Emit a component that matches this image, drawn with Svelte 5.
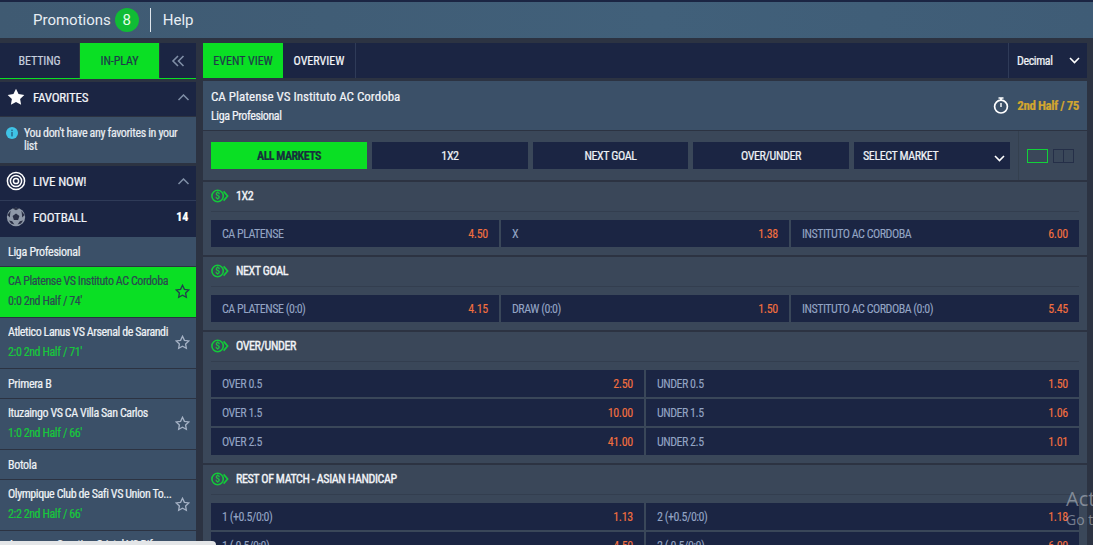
<script>
  const favStar = 'M9 1.6l2.3 4.8 5.2.7-3.8 3.6.9 5.2L9 13.4l-4.6 2.5.9-5.2L1.5 7.1l5.2-.7z';

  const sidebar = [
    { type: 'league', name: 'Liga Profesional' },
    { type: 'match', name: 'CA Platense VS Instituto AC Cordoba', info: '0:0 2nd Half / 74\'', active: true },
    { type: 'match', name: 'Atletico Lanus VS Arsenal de Sarandi', info: '2:0 2nd Half / 71\'' },
    { type: 'league', name: 'Primera B' },
    { type: 'match', name: 'Ituzaingo VS CA Villa San Carlos', info: '1:0 2nd Half / 66\'' },
    { type: 'league', name: 'Botola' },
    { type: 'match', name: 'Olympique Club de Safi VS Union To...', info: '2:2 2nd Half / 66\'' },
    { type: 'match', name: 'Amazonas Sporting Cristal VS Bif', info: '' },
  ];

  const filters = ['1X2', 'NEXT GOAL', 'OVER/UNDER'];

  const markets = [
    {
      title: '1X2',
      cols: 3,
      odds: [['CA PLATENSE', '4.50'], ['X', '1.38'], ['INSTITUTO AC CORDOBA', '6.00']],
    },
    {
      title: 'NEXT GOAL',
      cols: 3,
      odds: [['CA PLATENSE (0:0)', '4.15'], ['DRAW (0:0)', '1.50'], ['INSTITUTO AC CORDOBA (0:0)', '5.45']],
    },
    {
      title: 'OVER/UNDER',
      cols: 2,
      odds: [
        ['OVER 0.5', '2.50'], ['UNDER 0.5', '1.50'],
        ['OVER 1.5', '10.00'], ['UNDER 1.5', '1.06'],
        ['OVER 2.5', '41.00'], ['UNDER 2.5', '1.01'],
      ],
    },
    {
      title: 'REST OF MATCH - ASIAN HANDICAP',
      cols: 2,
      odds: [
        ['1 (+0.5/0:0)', '1.13'], ['2 (+0.5/0:0)', '1.18'],
        ['1 (-0.5/0:0)', '4.50'], ['2 (-0.5/0:0)', '6.00'],
      ],
    },
  ];
</script>

<div class="page">
  <header class="topbar">
    <span class="top-link">Promotions</span>
    <span class="count">8</span>
    <span class="top-sep"></span>
    <span class="top-link">Help</span>
  </header>

  <div class="layout">
    <aside class="sidebar">
      <div class="side-tabs">
        <button class="side-tab">BETTING</button>
        <button class="side-tab on">IN-PLAY</button>
        <button class="side-tab collapse" aria-label="Collapse">
          <svg width="14" height="12" viewBox="0 0 14 12" fill="none" stroke="#7f8ea6" stroke-width="1.6">
            <path d="M7 1L2 6l5 5M12.5 1l-5 5 5 5" />
          </svg>
        </button>
      </div>

      <div class="side-head fav">
        <svg width="20" height="20" viewBox="0 0 18 18" fill="#fff"><path d={favStar} /></svg>
        <span class="side-title">FAVORITES</span>
        <svg class="caret" width="13" height="7" viewBox="0 0 12 7" fill="none" stroke="#7f8ea6" stroke-width="1.5"><path d="M1 6l5-5 5 5" /></svg>
      </div>
      <div class="fav-note">
        <svg class="info" width="12" height="12" viewBox="0 0 12 12">
          <circle cx="6" cy="6" r="6" fill="#3fc3e6" />
          <rect x="5.2" y="5" width="1.6" height="4.4" fill="#2a6f93" />
          <rect x="5.2" y="2.6" width="1.6" height="1.5" fill="#2a6f93" />
        </svg>
        <span>You don't have any favorites in your list</span>
      </div>

      <div class="side-head live">
        <svg width="20" height="20" viewBox="0 0 20 20" fill="none" stroke="#fff" stroke-width="1.5">
          <circle cx="10" cy="10" r="8.6" />
          <circle cx="10" cy="10" r="5.6" />
          <circle cx="10" cy="10" r="2.6" />
        </svg>
        <span class="side-title">LIVE NOW!</span>
        <svg class="caret" width="13" height="7" viewBox="0 0 12 7" fill="none" stroke="#7f8ea6" stroke-width="1.5"><path d="M1 6l5-5 5 5" /></svg>
      </div>
      <div class="side-head sport">
        <svg width="20" height="20" viewBox="0 0 20 20">
          <circle cx="10" cy="10" r="9.2" fill="#8f99a8" />
          <path d="M10 6.4l3.4 2.5-1.3 4h-4.2l-1.3-4z" fill="#2a3045" />
          <path d="M6.6 1.6L10 3.2l3.4-1.6L10 .8zM1.4 8l2.4 2.6.4-4L4.6 3.8zM18.6 8l-2.4 2.6-.4-4-.4-2.8zM5 16.6l3.4.8-2.2-3.2-3.2-.6zM15 16.6l-3.4.8 2.2-3.2 3.2-.6z" fill="#2a3045" />
        </svg>
        <span class="side-title">FOOTBALL</span>
        <span class="sport-count">14</span>
      </div>

      {#each sidebar as row}
        {#if row.type === 'league'}
          <div class="league">{row.name}</div>
        {:else}
          <div class="match" class:active={row.active}>
            <div class="match-text">
              <div class="match-name">{row.name}</div>
              <div class="match-info">{row.info}</div>
            </div>
            <svg class="match-star" width="15" height="15" viewBox="0 0 18 18" fill="none" stroke-width="1.6"><path d={favStar} /></svg>
          </div>
        {/if}
      {/each}
    </aside>

    <main class="content">
      <div class="view-tabs">
        <button class="view-tab on">EVENT VIEW</button>
        <button class="view-tab">OVERVIEW</button>
        <div class="odds-format">
          <span>Decimal</span>
          <svg width="11" height="7" viewBox="0 0 11 7" fill="none" stroke="#fff" stroke-width="1.6"><path d="M1 1l4.5 4.5L10 1" /></svg>
        </div>
      </div>

      <div class="event-head">
        <div>
          <div class="event-name">CA Platense VS Instituto AC Cordoba</div>
          <div class="event-league">Liga Profesional</div>
        </div>
        <div class="event-time">
          <svg width="16" height="17" viewBox="0 0 16 17" fill="none" stroke="#fff">
            <circle cx="8" cy="9.6" r="6.4" stroke-width="1.7" />
            <path d="M5.5 1h5M8 1v2" stroke-width="1.7" />
            <path d="M8 6v4" stroke="#fff" stroke-width="1.4" />
          </svg>
          <span>2nd Half / 75</span>
        </div>
      </div>

      <div class="filter-bar">
        <div class="filters">
          <button class="filter on">ALL MARKETS</button>
          {#each filters as f}
            <button class="filter">{f}</button>
          {/each}
          <button class="filter select">
            <span>SELECT MARKET</span>
            <svg width="11" height="7" viewBox="0 0 11 7" fill="none" stroke="#fff" stroke-width="1.6"><path d="M1 1l4.5 4.5L10 1" /></svg>
          </button>
        </div>
        <div class="layout-toggle">
          <span class="lay single"></span>
          <span class="lay double"></span>
        </div>
      </div>

      {#each markets as m}
        <section class="market">
          <div class="market-head">
            <svg width="18" height="14" viewBox="0 0 18 14" fill="none" stroke="#13c93a">
              <circle cx="6.6" cy="7" r="5.7" stroke-width="1.6" />
              <path d="M12.6 2.4l4 4.6-4 4.6" stroke-width="1.7" />
              <text x="6.6" y="10" text-anchor="middle" font-size="8.5" font-family="Roboto, sans-serif" font-weight="700" fill="#13c93a" stroke="none">$</text>
            </svg>
            <span>{m.title}</span>
          </div>
          <div class="odds" class:three={m.cols === 3}>
            {#each m.odds as o}
              <div class="odd">
                <span class="odd-label">{o[0]}</span>
                <span class="odd-value">{o[1]}</span>
              </div>
            {/each}
          </div>
        </section>
      {/each}
    </main>
  </div>

  <div class="watermark">
    <div class="wm-big">Act</div>
    <div class="wm-small">Go t</div>
  </div>
  <div class="hscroll"></div>
</div>

<style>
  :global(body) {
    margin: 0;
    background: #2c3342;
  }

  .page {
    position: relative;
    height: 545px;
    overflow: hidden;
    background: #2c3342;
    font-family: "Roboto Condensed", "Liberation Sans Narrow", Roboto, sans-serif;
    font-size: 12px;
    color: #fff;
    -webkit-text-stroke: 0.2px;
  }

  button {
    font: inherit;
    border: none;
    color: inherit;
    padding: 0;
  }

  .topbar {
    box-sizing: border-box;
    height: 38px;
    border-top: 2px solid #1b2543;
    background: linear-gradient(90deg, #3f5a72, #41607a 60%, #3f5c76);
    display: flex;
    align-items: center;
    padding-left: 33px;
    font-family: Roboto, sans-serif;
    -webkit-text-stroke: 0;
  }

  .top-link {
    font-size: 15px;
    color: #e8eef4;
  }

  .count {
    width: 24px;
    height: 24px;
    margin-left: 4px;
    border-radius: 50%;
    background: #10bc35;
    font-size: 15px;
    line-height: 24px;
    text-align: center;
    color: #e6ffe8;
  }

  .top-sep {
    width: 1px;
    height: 24px;
    margin: 0 12px 0 11px;
    background: #dfe6ec;
  }

  .layout {
    display: grid;
    grid-template-columns: 196px 884px;
    gap: 7px;
    padding-top: 5px;
  }

  .side-tabs {
    display: flex;
    gap: 1px;
    height: 35px;
    border-bottom: 1px solid #0adf24;
    margin-bottom: 3px;
  }

  .side-tab {
    width: 79px;
    background: #1b2543;
    color: #c6cede;
    letter-spacing: -0.1px;
  }

  .side-tab.on,
  .view-tab.on,
  .filter.on {
    background: #0adf24;
    color: #1f3a4a;
  }

  .side-tab.collapse {
    flex: 1;
    display: flex;
    align-items: center;
    justify-content: center;
  }

  .side-head {
    box-sizing: border-box;
    display: flex;
    align-items: center;
    height: 34px;
    padding: 0 6px 4px 6px;
    background: #1b2543;
  }

  .side-head.live {
    height: 35px;
    margin-top: 3px;
    border-bottom: 1px solid #2f3b58;
  }

  .side-head.sport {
    height: 36px;
    padding-right: 8px;
  }

  .side-title {
    flex: 1;
    margin-left: 7px;
    font-size: 13px;
    letter-spacing: -0.2px;
    color: #f2f4f8;
  }

  .sport-count {
    font-weight: 700;
    letter-spacing: -0.2px;
  }

  .fav-note {
    box-sizing: border-box;
    height: 46px;
    margin-top: 1px;
    padding: 10px 8px 0 6px;
    display: flex;
    gap: 6px;
    background: #3b5068;
    line-height: 13px;
    letter-spacing: -0.36px;
    color: #e9edf2;
  }

  .info {
    flex: none;
  }

  .league {
    box-sizing: border-box;
    height: 30px;
    padding-left: 8px;
    display: flex;
    align-items: center;
    background: #3b5068;
    border-bottom: 1px solid #2c3342;
    color: #eef2f6;
    letter-spacing: -0.3px;
  }

  .match {
    box-sizing: border-box;
    height: 51px;
    padding: 0 6px 0 8px;
    display: flex;
    align-items: center;
    background: #3b5068;
    border-bottom: 1px solid #2c3342;
    letter-spacing: -0.42px;
  }

  .match-text {
    width: 167px;
    margin-bottom: 2px;
  }

  .match-name {
    color: #eef2f6;
    white-space: nowrap;
    overflow: hidden;
  }

  .match-info {
    margin-top: 6px;
    color: #17c83c;
    height: 14px;
  }

  .match-star {
    flex: none;
    margin-bottom: 1px;
    stroke: #a4b1c4;
  }

  .match.active {
    background: #0adf24;
  }

  .match.active .match-name,
  .match.active .match-info {
    color: #2a4a50;
  }

  .match.active .match-star {
    stroke: #22404c;
  }

  .view-tabs {
    display: flex;
    height: 35px;
    background: #1b2543;
    margin-bottom: 3px;
  }

  .view-tab {
    width: 80px;
    background: #1b2543;
    color: #f4f6f9;
    border-right: 1px solid #2f3b58;
  }

  .view-tab.on {
    border-right: none;
  }

  .view-tab:nth-child(2) {
    width: 73px;
  }

  .odds-format {
    box-sizing: border-box;
    width: 79px;
    margin-left: auto;
    padding: 0 7px 0 8px;
    display: flex;
    align-items: center;
    justify-content: space-between;
    border-left: 1px solid #2f3b58;
    color: #f0f3f7;
    letter-spacing: -0.4px;
  }

  .event-head {
    box-sizing: border-box;
    height: 49px;
    padding: 8px 8px 0;
    display: flex;
    justify-content: space-between;
    background: #3b5068;
  }

  .event-name {
    font-size: 13px;
    line-height: 16px;
    color: #f2f4f8;
  }

  .event-league {
    margin-top: 4px;
    line-height: 14px;
    letter-spacing: -0.4px;
    color: #f2f4f8;
  }

  .event-time {
    display: flex;
    align-items: center;
    gap: 8px;
    height: 32px;
    font-size: 13px;
    font-weight: 700;
    letter-spacing: -0.45px;
    color: #d2a62f;
  }

  .filter-bar {
    box-sizing: border-box;
    height: 51px;
    margin-top: 1px;
    padding-left: 8px;
    display: flex;
    align-items: center;
    background: #3a4759;
    border-bottom: 2px solid #2c3342;
  }

  .filters {
    display: grid;
    grid-template-columns: 156px 156px 155px 156px 156px;
    gap: 5px;
  }

  .filter {
    height: 27px;
    background: #1b2543;
    color: #f0f3f7;
    letter-spacing: -0.4px;
  }

  .filter.on {
    color: #17303c;
    font-weight: 700;
    letter-spacing: -0.55px;
  }

  .filter.select {
    padding: 0 5px 0 9px;
    display: flex;
    align-items: center;
    justify-content: space-between;
  }

  .filter.select svg {
    margin-top: 5px;
  }

  .layout-toggle {
    align-self: stretch;
    display: flex;
    align-items: center;
    gap: 5px;
    margin-left: 8px;
    padding-left: 8px;
    border-left: 1px solid #34404f;
  }

  .lay {
    box-sizing: border-box;
    width: 21px;
    height: 14px;
    border: 1px solid #12d13a;
  }

  .lay.double {
    border-color: #252f48;
    background: linear-gradient(#252f48, #252f48) center / 1px 100% no-repeat;
  }

  .market {
    padding: 0 8px 8px;
    background: #3a4759;
    border-bottom: 2px solid #2c3342;
  }

  .market-head {
    box-sizing: border-box;
    height: 30px;
    padding-bottom: 2px;
    display: flex;
    align-items: center;
    gap: 7px;
    border-bottom: 1px solid #333e4f;
    margin-bottom: 8px;
    color: #f2f4f8;
    letter-spacing: -0.4px;
    -webkit-text-stroke: 0.35px;
  }

  .odds {
    display: grid;
    grid-template-columns: 1fr 1fr;
    gap: 2px;
  }

  .odds.three {
    grid-template-columns: 1fr 1fr 1fr;
  }

  .odd {
    box-sizing: border-box;
    height: 27px;
    padding: 0 11px;
    display: flex;
    align-items: center;
    justify-content: space-between;
    background: #1b2543;
    -webkit-text-stroke: 0.1px;
  }

  .odd-label {
    color: #93a4c4;
    letter-spacing: -0.5px;
  }

  .odd-value {
    color: #f4703f;
    letter-spacing: -0.3px;
  }

  .watermark {
    position: absolute;
    left: 1066px;
    top: 488px;
    color: rgba(205, 210, 218, 0.5);
    font-family: "Open Sans", sans-serif;
    white-space: nowrap;
    -webkit-text-stroke: 0;
  }

  .wm-big {
    font-size: 20px;
    line-height: 22px;
  }

  .wm-small {
    font-size: 14px;
    line-height: 19px;
  }

  .hscroll {
    position: absolute;
    left: 0;
    bottom: 0;
    width: 216px;
    height: 4px;
    background: #e4e6e8;
    border-radius: 0 4px 0 0;
  }
</style>
